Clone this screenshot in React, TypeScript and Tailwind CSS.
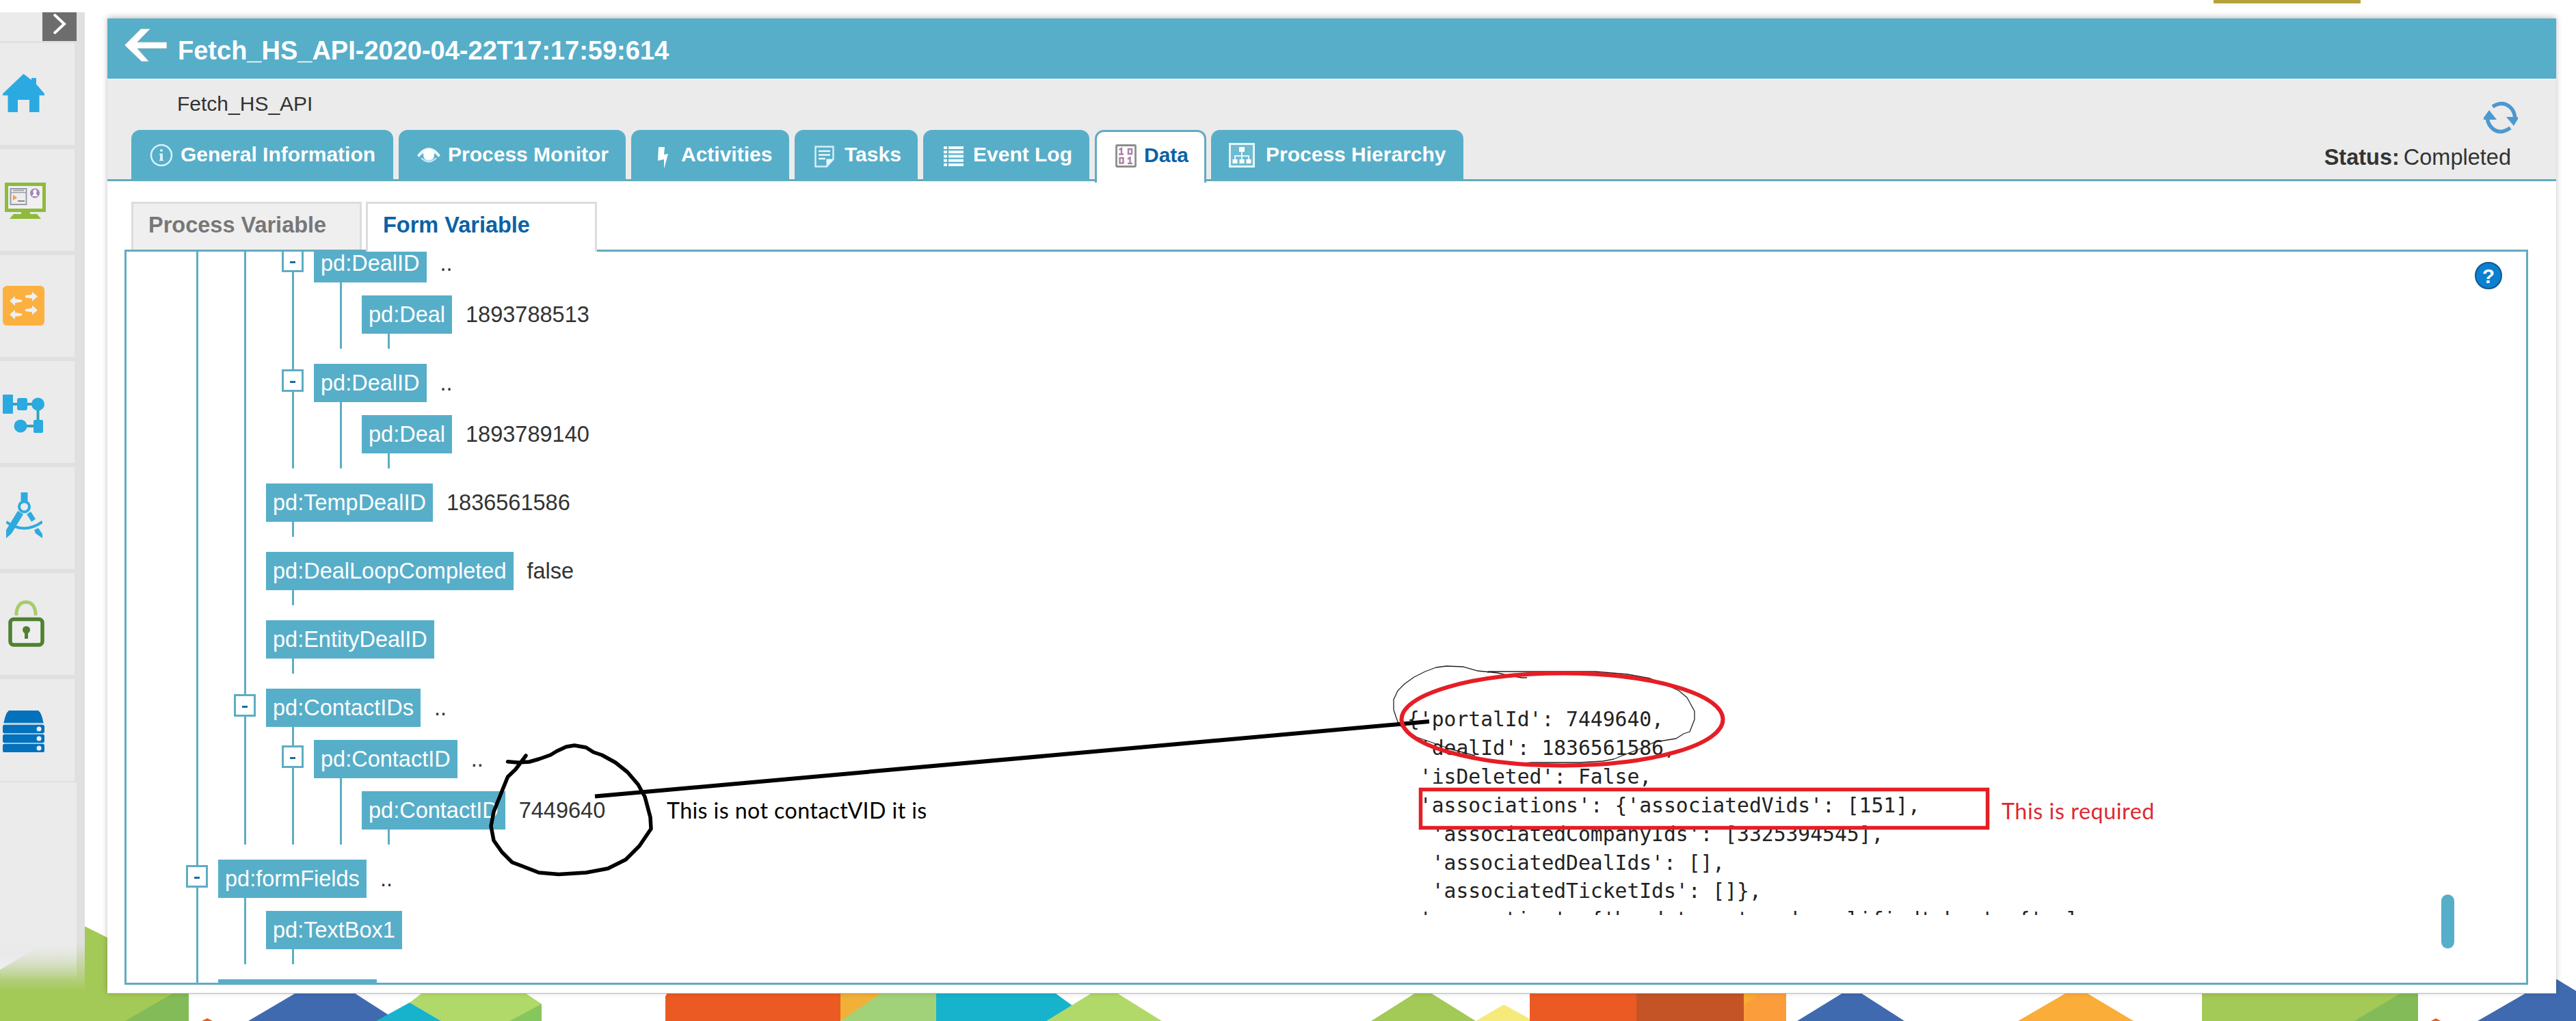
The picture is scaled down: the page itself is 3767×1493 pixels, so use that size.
import React from "react";

type TreeItem = {
  label?: string;
  value?: string;
  open?: boolean;
  children?: TreeItem[];
};

const contactAndDeals: TreeItem[] = [
  {
    children: [
      { label: "pd:DealID", value: "..", open: true, children: [{ label: "pd:Deal", value: "1893788513" }] },
      { label: "pd:DealID", value: "..", open: true, children: [{ label: "pd:Deal", value: "1893789140" }] },
    ],
  },
  { label: "pd:TempDealID", value: "1836561586" },
  { label: "pd:DealLoopCompleted", value: "false" },
  { label: "pd:EntityDealID" },
  {
    label: "pd:ContactIDs",
    value: "..",
    open: true,
    children: [
      { label: "pd:ContactID", value: "..", open: true, children: [{ label: "pd:ContactID", value: "7449640" }] },
    ],
  },
];

const tree: TreeItem[] = [
  { children: contactAndDeals },
  { label: "pd:formFields", value: "..", open: true, children: [{ label: "pd:TextBox1" }] },
];

function TreeNode({ item }: { item: TreeItem }) {
  return (
    <li>
      {item.label && (
        <div className="relative flex h-14 items-center">
          {item.open && (
            <span className="absolute -left-[47px] top-2 flex h-[33px] w-8 items-center justify-center border-[3px] border-[#5eadc3] bg-white">
              <span className="mt-[3px] h-[3px] w-2 bg-[#1d6c9c]" />
            </span>
          )}
          <span className="flex h-14 items-center whitespace-nowrap bg-[#57aec9] px-[10px] text-white">{item.label}</span>
          {item.value && <span className="ml-[20px] text-[#333]">{item.value}</span>}
        </div>
      )}
      {item.children ? (
        <ul className={`ml-[38px] flex flex-col gap-[22px] border-l-[3px] border-[#5eadc3] pl-[29px] ${item.label ? "pt-[19px]" : ""}`}>
          {item.children.map((c, i) => (
            <TreeNode key={i} item={c} />
          ))}
        </ul>
      ) : (
        <div className="ml-[38px] h-[22px] w-[3px] bg-[#5eadc3]" />
      )}
    </li>
  );
}

const sideIcons = [
  <svg key="home" className="absolute left-1 top-[45px] h-[56px] w-[61px]" viewBox="0 0 61 56" fill="#2baae2">
    <path d="M30.500 0 L42 9 V6 H49 V15 L61 29 V31.500 H53.500 V56 H39 V38 H22 V56 H7.500 V31.500 H0 V29 Z" />
  </svg>,
  <svg key="monitor" className="absolute left-[7px] top-[49px] h-[53px] w-[60px]" viewBox="0 0 60 53">
    <path d="M0 0H60V43H37V46H47L53 53H7L13 46H24V43H0Z" fill="#8fba3c" />
    <rect x="5" y="5" width="50" height="33" fill="#f0f0f0" />
    <rect x="8.500" y="9" width="23" height="23" fill="#ededed" stroke="#9a9ca8" strokeWidth="2" />
    <path d="M9 14.500H31M12 11.500H28" stroke="#9a9ca8" strokeWidth="1.500" />
    <path d="M12 18L18 22L12 26Z" fill="#f39c45" />
    <path d="M19 27H29" stroke="#888" strokeWidth="2" />
    <circle cx="44" cy="15.500" r="7" fill="#a585b5" />
    <path d="M44 10a3 3 0 0 1 2 5v2l3 3H39l3-3v-2a3 3 0 0 1 2-5Z" fill="#fff" />
  </svg>,
  <svg key="swap" className="absolute left-1 top-[45px] h-[58px] w-[61px]" viewBox="0 0 61 58">
    <rect width="61" height="58" rx="6" fill="#fbb03f" />
    <g fill="#efefef">
      <path d="M10 22L18 15V19L28 20.500V23.500L18 25V29Z" />
      <path d="M10 42L18 35V39L28 40.500V43.500L18 45V49Z" />
      <path d="M51 15.500L43 8.500V12.500L33 14V17L43 18.500V22.500Z" />
      <path d="M51 35.500L43 28.500V32.500L33 34V37L43 38.500V42.500Z" />
    </g>
  </svg>,
  <svg key="flow" className="absolute left-1 top-[49px] h-[56px] w-[61px]" viewBox="0 0 61 56" fill="#2baae2">
    <path d="M10 14H51.500V46H26" fill="none" stroke="#35a3b5" strokeWidth="4" />
    <rect width="15" height="28" rx="1" />
    <rect x="21" y="5" width="15" height="18" rx="3" />
    <circle cx="51.500" cy="14" r="9.500" />
    <circle cx="26" cy="46" r="9.500" />
    <rect x="45" y="37" width="14" height="19" rx="2" />
  </svg>,
  <svg key="compass" className="absolute left-[9px] top-[37px] h-[68px] w-[53px]" viewBox="0 0 53 68">
    <g stroke="#2eaadf" fill="none">
      <path d="M26.500 0V14" strokeWidth="10" />
      <circle cx="26.500" cy="21" r="7.500" strokeWidth="4" />
      <path d="M0 43Q26 62 53 43" strokeWidth="4" />
      <path d="M33 30L40 41" strokeWidth="7" />
    </g>
    <path d="M17 27L25 32L8 60L0 67V55ZM41 55L47 52L53 61V67L43 60Z" fill="#2eaadf" />
  </svg>,
  <svg key="lock" className="absolute left-3 top-[40px] h-[68px] w-[53px]" viewBox="0 0 53 68">
    <path d="M12 22V18Q14 2.500 26 2.500T40 18V22" fill="none" stroke="#a9cc6c" strokeWidth="5" />
    <rect x="3" y="27.500" width="47" height="37.500" rx="5" fill="#ededed" stroke="#4f8131" strokeWidth="5.500" />
    <circle cx="26.500" cy="43" r="5.500" fill="#4f8131" />
    <path d="M24 45H29V56H24Z" fill="#4f8131" />
  </svg>,
  <svg key="server" className="absolute left-1 top-[46px] h-[61px] w-[61px]" viewBox="0 0 61 61">
    <path d="M9 0H52Q57 4 59 16L60 18H1L2 16Q4 4 9 0Z" fill="#0471bd" />
    <path d="M2 19.500H59M2 34H59M2 48H59" stroke="#8dbbdc" strokeWidth="1.500" />
    <rect y="21" width="61" height="12" rx="2" fill="#0471bd" />
    <rect y="35" width="61" height="12" rx="2" fill="#0471bd" />
    <rect y="49" width="61" height="12" rx="2" fill="#0471bd" />
    <g fill="#e6f0f6">
      <circle cx="53" cy="27" r="3.500" />
      <circle cx="53" cy="41" r="3.500" />
      <circle cx="53" cy="55" r="3.500" />
    </g>
  </svg>,
];

function Sidebar() {
  return (
    <aside className="mt-[18px] flex h-[1434px] w-[124px] shrink-0 flex-col bg-[linear-gradient(to_bottom,#e0e0e0_1360px,transparent_1432px)]">
      <div className="flex h-[42px] shrink-0">
        <div className="w-[62px] bg-[#ebebeb]" />
        <div className="flex w-[50px] items-center justify-center bg-[#6d6d6d]">
          <svg className="-mt-2 h-[30px] w-[20px]" viewBox="0 0 20 30" fill="none" stroke="#fff" strokeWidth="4">
            <path d="M2 1L17 15L2 29" />
          </svg>
        </div>
      </div>
      <div className="mt-[3px] flex shrink-0 flex-col gap-[6px]">
        {sideIcons.map((icon, i) => (
          <div key={i} className="relative h-[149px] w-[109px] bg-[#ebebeb]">
            {icon}
          </div>
        ))}
      </div>
      <div className="mt-[2px] w-[112px] flex-1 bg-[linear-gradient(to_bottom,#ebebeb_235px,transparent_290px)]" />
    </aside>
  );
}

function Backdrop() {
  return (
    <svg className="absolute inset-0 h-[1493px] w-[3767px]" viewBox="0 0 3767 1493">
      <path d="M0 1418L115 1350L157 1371L276 1440V1493H0Z" fill="#a3c957" />
      <path d="M254 1452H276V1493H183Z" fill="#82bb57" />
      <path d="M295 1493L303 1489L311 1493Z" fill="#eb5a23" />
      <path d="M436 1450H515L568 1484L560 1493H363Z" fill="#406ab0" />
      <path d="M620 1450H765L792 1468V1493H645L599 1466Z" fill="#b1d969" />
      <path d="M792 1468V1493H745Z" fill="#87c65f" />
      <path d="M599 1466L645 1493H550Z" fill="#17b3cd" />
      <path d="M973 1457L977 1450H1229V1493H973Z" fill="#eb5a23" />
      <path d="M1229 1450H1290V1460L1229 1493Z" fill="#f1b037" />
      <path d="M1292 1450H1369V1493H1229Z" fill="#a1d27a" />
      <path d="M1369 1450H1540L1569 1471L1540 1493H1369Z" fill="#17b3cd" />
      <path d="M1600 1450H1630L1699 1493H1530Z" fill="#b1d969" />
      <path d="M2073 1450H2089L2158 1493H2005Z" fill="#a3c957" />
      <path d="M2199 1469L2243 1493H2158Z" fill="#f6ea7b" />
      <path d="M2237 1450H2394V1493H2237Z" fill="#eb5a23" />
      <path d="M2393 1450H2550V1493H2393Z" fill="#c45425" />
      <path d="M2550 1450H2612V1493H2550Z" fill="#fc9d3b" />
      <path d="M2550 1450H2578L2550 1470Z" fill="#f9ab32" />
      <path d="M2698 1450H2718L2785 1493H2628Z" fill="#406ab0" />
      <path d="M3025 1450H3048L3120 1493H2951Z" fill="#fbad3a" />
      <path d="M3220 1450H3536V1493H3220Z" fill="#a3c957" />
      <path d="M3515 1450H3536V1493H3443Z" fill="#82bb57" />
      <path d="M3555 1493L3562 1489L3569 1493Z" fill="#eb5a23" />
      <path d="M3623 1493L3694 1452L3739 1432L3767 1449V1493Z" fill="#406ab0" />
      <rect x="3237" width="215" height="5" fill="#b4a33c" />
    </svg>
  );
}

const tabs = [
  {
    label: "General Information",
    box: "w-[383px] pl-[27px]",
    text: "ml-[11px]",
    icon: (
      <svg className="h-[34px] w-[34px]" viewBox="0 0 34 34" fill="none" stroke="#d8f2fa">
        <circle cx="17" cy="17" r="15" strokeWidth="2.500" />
        <path d="M17 14.500V24M17 8.500V11.500" strokeWidth="4" />
        <path d="M14 15.500H17M14 24.500H20" strokeWidth="1.500" />
      </svg>
    ),
  },
  {
    label: "Process Monitor",
    box: "w-[332px] pl-[27px]",
    text: "ml-[11px]",
    icon: (
      <svg className="h-[22px] w-[34px]" viewBox="0 0 34 22">
        <path d="M0 11Q17 -11 34 11L31 14Q27 9 25 8Q26 19 17 19Q8 19 9 8Q7 9 3 14Z" fill="#e8f8fc" />
        <path d="M6 15Q17 26 28 15" fill="none" stroke="#cdebf5" strokeWidth="2" />
        <circle cx="17" cy="9.500" r="7.500" fill="#fff" />
      </svg>
    ),
  },
  {
    label: "Activities",
    box: "w-[231px] pl-[38px]",
    text: "ml-[18px]",
    icon: (
      <svg className="mt-2 h-[32px] w-[17px]" viewBox="0 0 17 32" fill="#fff">
        <path d="M2 0H11L10 11L16 10L10 32L10 18L1 20Z" />
      </svg>
    ),
  },
  {
    label: "Tasks",
    box: "w-[180px] pl-[29px]",
    text: "ml-[15px]",
    icon: (
      <svg className="mt-1 h-[32px] w-[29px]" viewBox="0 0 29 32">
        <path d="M1.500 1.500H27.500V20L18 30.500H1.500Z" fill="#57aec9" stroke="#d3eff7" strokeWidth="2.500" />
        <path d="M6 8H23M6 13.500H23M6 19H16" stroke="#e8f8fc" strokeWidth="2.500" />
        <path d="M27 19.500H17.500V30Z" fill="#e8f8fc" />
      </svg>
    ),
  },
  {
    label: "Event Log",
    box: "w-[243px] pl-[30px]",
    text: "ml-[14px]",
    icon: (
      <svg className="mt-1 h-[29px] w-[29px]" viewBox="0 0 29 29" fill="#f3fdff">
        <path d="M0 0H5V4H0ZM7 0H29V4H7ZM0 6.200H5V10.200H0ZM7 6.200H29V10.200H7ZM0 12.500H5V16.500H0ZM7 12.500H29V16.500H7ZM0 18.700H5V22.700H0ZM7 18.700H29V22.700H7ZM0 25H5V29H0ZM7 25H29V29H7Z" />
      </svg>
    ),
  },
  {
    label: "Data",
    active: true,
    box: "w-[163px] pl-[27px]",
    text: "ml-[11px]",
    icon: (
      <svg className="h-[34px] w-[31px]" viewBox="0 0 31 34" fill="none">
        <rect x="1.500" y="1.500" width="28" height="31" rx="1" stroke="#8d8d8d" strokeWidth="2.800" />
        <g stroke="#ab7fa6" strokeWidth="2.400">
          <path d="M5.500 8L9 6V14M5 14.500H12M19 7H24V14H19ZM6.500 20H11.500V27.500H6.500ZM18 21.500L21.500 19.500V27.500M18 28H25" />
        </g>
      </svg>
    ),
  },
  {
    label: "Process Hierarchy",
    box: "-ml-px w-[369px] pl-[26px]",
    text: "ml-[16px]",
    icon: (
      <svg className="mt-px h-[36px] w-[38px]" viewBox="0 0 38 36">
        <rect x="1.500" y="1.500" width="35" height="33" fill="#6fbbd1" stroke="#e3f6fb" strokeWidth="3" />
        <path d="M19 12V24M9 24V19H29V24" fill="none" stroke="#e3f6fb" strokeWidth="2" />
        <g fill="#fff">
          <rect x="15" y="6" width="8" height="7" />
          <rect x="5.500" y="24" width="7" height="6" />
          <rect x="15.500" y="24" width="7" height="6" />
          <rect x="25.500" y="24" width="7" height="6" />
        </g>
      </svg>
    ),
  },
];

function Header() {
  return (
    <>
      <div className="flex h-[88px] items-start bg-[#57aec9] pl-[25px]">
        <svg className="mt-[13px] h-[52px] w-[62px]" viewBox="0 0 62 52" fill="#fff" stroke="#7fa5b3" strokeWidth="0.700">
          <path d="M0 26L24 2H38L19 21.500H62V31H19L36 50H25Z" />
        </svg>
        <h1 className="ml-4 mt-[25px] text-[38px] font-bold leading-[44px] text-white">Fetch_HS_API-2020-04-22T17:17:59:614</h1>
      </div>
      <div className="flex h-[150px] justify-between border-b-[3px] border-t-[2px] border-b-[#62abc0] border-t-[#e3f4fb] bg-[#ebebeb]">
        <div className="flex flex-col">
          <div className="ml-[102px] mt-[17px] h-[56px] shrink-0 text-[30px] leading-[36px] text-[#333]">Fetch_HS_API</div>
          <div className="ml-[35px] flex shrink-0 gap-[8px]">
            {tabs.map((t) => (
              <div
                key={t.label}
                className={`flex items-center whitespace-nowrap rounded-t-[13px] text-[30px] font-bold ${t.box} ${
                  t.active
                    ? "relative h-[77px] border-[3px] border-b-0 border-[#62abc0] bg-white pb-[5px] text-[#0b62a5]"
                    : "h-[73px] bg-[#57aec9] text-white"
                }`}
              >
                {t.icon}
                <span className={`${t.text} -mt-[2px]`}>{t.label}</span>
              </div>
            ))}
          </div>
        </div>
        <div className="mr-[56px] flex flex-col items-end pt-[31px]">
          <svg className="h-[48px] w-[50px]" viewBox="0 0 50 48" fill="none" stroke="#4c98d0" strokeWidth="5.500">
            <path d="M13 8Q27 -1 38 8Q46 15 45.500 25M39 39Q23 50 12 39Q6 33 5.500 25" />
            <path d="M33 23H50V26L44 36ZM0 27H19L8 13L0 24Z" fill="#4c98d0" stroke="none" />
          </svg>
          <div className="mr-[10px] mt-[16px] text-[32.5px] leading-[36px] text-[#333]">
            <b>Status:</b>
            <span className="ml-[6px]">Completed</span>
          </div>
        </div>
      </div>
    </>
  );
}

const payload = `{'portalId': 7449640,
 'dealId': 1836561586,
 'isDeleted': False,
 'associations': {'associatedVids': [151],
  'associatedCompanyIds': [3325394545],
  'associatedDealIds': [],
  'associatedTicketIds': []},`;

const payloadTail = ` 'properties': {'hs_date_entered_qualifiedtobuy': {'value`;

function Annotations() {
  return (
    <>
      <div className="absolute left-[2058px] top-[1031px] text-[29.66px] leading-[41.9px] text-[#222]">
        <pre className="w-[840px] font-['DejaVu_Sans_Mono',monospace]">{payload}</pre>
        <pre className="h-[14px] w-[1000px] overflow-hidden font-['DejaVu_Sans_Mono',monospace]">{payloadTail}</pre>
      </div>
      <span className="absolute left-[975px] top-[1164px] whitespace-nowrap font-['Lato',sans-serif] text-[32.200px] leading-[42px] tracking-[0.400px] text-black">
        This is not contactVID it is
      </span>
      <span className="absolute left-[2927px] top-[1165px] whitespace-nowrap font-['Lato',sans-serif] text-[32.200px] leading-[42px] tracking-[0.600px] text-[#dd2a30]">
        This is required
      </span>
      <svg className="absolute inset-0 h-[1493px] w-[3767px]" viewBox="0 0 3767 1493" fill="none" strokeLinejoin="round">
        <path
          stroke="#222"
          strokeWidth="1.300"
          d="M2233 991H2225L2203 987L2190 984L2161 981L2140 975L2115 974L2100 976L2084 982L2068 990L2054 1000L2044 1010L2038 1023V1038L2042 1050L2046 1060L2057 1068L2072 1078L2092 1085L2120 1095L2157 1105M2207 1118L2240 1115H2310L2344 1113L2360 1110L2380 1102L2398 1095L2420 1085L2451 1080L2462 1073L2471 1070L2478 1052V1040L2467 1020L2455 1010L2440 1003L2413 992L2380 986L2333 982H2176V984"
        />
        <path stroke="#000" strokeWidth="6" d="M870 1164.500L2090 1055" />
        <path
          stroke="#000"
          strokeWidth="5.500"
          strokeLinecap="round"
          d="M769 1105L754 1125L742.500 1136L734 1157L722 1187L718 1208L722 1229L734 1246L749 1261L765 1267L788 1276L817 1278.600L857 1276L889 1270L915 1257L935 1237L952 1212L951 1195L943 1165L933 1147L917.500 1129L900 1115L880 1104L868 1100L857 1093L840 1090L828 1092L814 1098.500L805 1104L788 1110L774 1114L757 1115L742.500 1113.700"
        />
        <ellipse cx="2284.500" cy="1052" rx="235" ry="67.500" stroke="#e51e26" strokeWidth="6" />
        <rect x="2077.500" y="1154.500" width="829" height="56" stroke="#e51e26" strokeWidth="5.500" strokeLinejoin="miter" />
      </svg>
    </>
  );
}

export default function App() {
  return (
    <div className="relative h-[1493px] w-[3767px] overflow-hidden bg-white font-['Liberation_Sans',Arial,sans-serif]">
      <Backdrop />
      <div className="relative flex">
        <Sidebar />
        <main className="ml-[33px] mt-[27px] flex h-[1426px] w-[3581px] flex-col border-b border-[#bbb] bg-white shadow-[0_-2px_8px_rgba(0,0,0,0.25)]">
          <Header />
          <div className="mt-[30px] flex gap-[6px] pl-[35px] text-[32.5px] font-bold">
            <div className="h-[70px] w-[337px] border-[3px] border-b-0 border-[#dcdcdc] bg-[#efefef] pl-[22px] pt-[13px] leading-[37px] text-[#777]">
              Process Variable
            </div>
            <div className="relative -mb-[3px] h-[73px] w-[338px] border-[3px] border-b-0 border-[#dcdcdc] bg-white pl-[22px] pt-[13px] leading-[37px] text-[#0b62a5]">
              Form Variable
            </div>
          </div>
          <div className="ml-[25px] flex h-[1075px] w-[3515px] justify-between overflow-hidden border-[3px] border-[#62abc0]">
            <ul className="-mt-[11px] ml-[102px] flex h-[1100px] flex-col gap-[22px] border-l-[3px] border-[#5eadc3] pl-[29px] text-[32.5px] leading-[37px]">
              {tree.map((n, i) => (
                <TreeNode key={i} item={n} />
              ))}
              <li className="h-14 w-[232px] bg-[#57aec9]" />
            </ul>
            <div className="flex w-[75px] flex-col">
              <div className="mt-[15px] flex h-10 w-10 items-center justify-center rounded-full border-2 border-[#14578c] bg-[#0b7fd0] text-[30px] font-bold text-white">
                ?
              </div>
              <div className="-ml-[49px] mt-[885px] h-[79px] w-[19px] rounded-full bg-[#57aec9]" />
            </div>
          </div>
        </main>
      </div>
      <Annotations />
    </div>
  );
}
